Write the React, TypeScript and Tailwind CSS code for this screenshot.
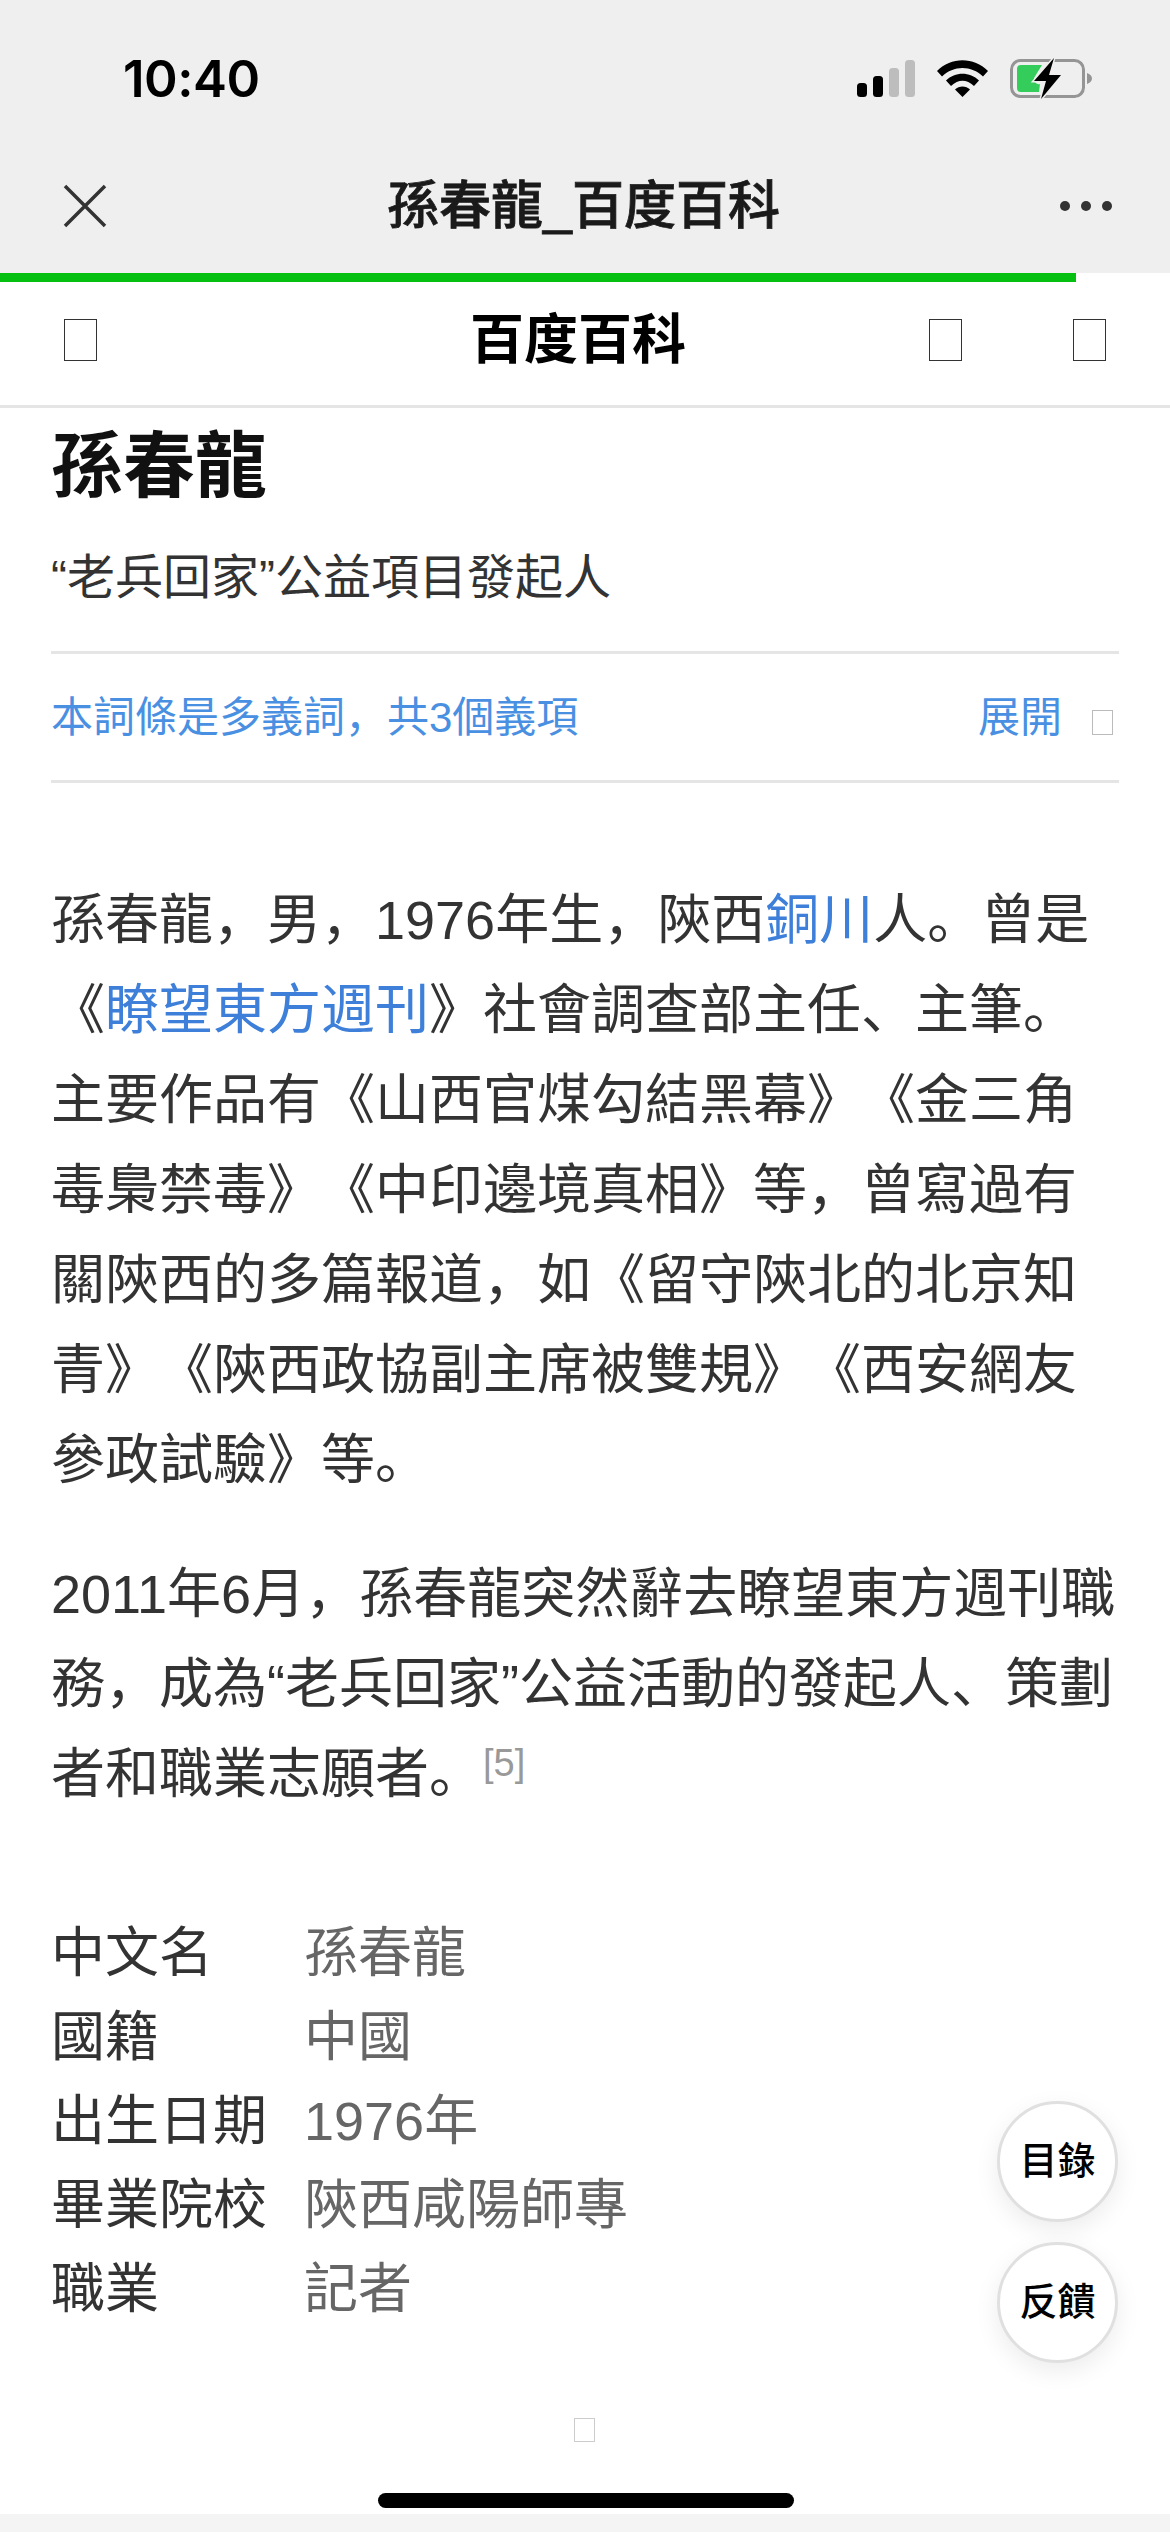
import React from "react";

const CJK = "font-['Liberation_Sans','Noto_Sans_CJK_SC','Noto_Sans_CJK_TC',sans-serif] [text-spacing-trim:space-all]";

function Box({ className }: { className: string }) {
  return <div className={"border border-solid " + className} />;
}

function Link({ children }: { children: React.ReactNode }) {
  return <span className="text-[#3d7fd9]">{children}</span>;
}

function Row({ k, v }: { k: string; v: string }) {
  return (
    <div className="flex h-[84px] items-center text-[54px]">
      <div className="w-[253px] text-[#333333]">{k}</div>
      <div className="text-[#666666]">{v}</div>
    </div>
  );
}

function Round({ t }: { t: string }) {
  return (
    <div className="flex h-[121px] w-[121px] items-center justify-center rounded-full border-[3px] border-solid border-[#e0e0e0] bg-white text-[38px] font-medium text-black shadow-[0_8px_24px_rgba(0,0,0,0.08)]">
      {t}
    </div>
  );
}

export default function App() {
  return (
    <div className={"relative flex h-[2532px] w-[1170px] flex-col overflow-hidden bg-white " + CJK}>
      <div className="h-[273px] shrink-0 bg-[#efefef]">
        <div className="flex h-[155px] items-center justify-between pl-[123px] pr-[78px] pt-[1px]">
          <div className="font-['Inter',sans-serif] text-[51px] font-semibold leading-none tracking-[-0.5px] text-black">10:40</div>
          <div className="flex items-center">
            <svg width="58" height="37" viewBox="0 0 58 37" className="mr-[22px]">
              <rect x="0" y="23" width="10" height="14" rx="3.5" fill="#000" />
              <rect x="16" y="16" width="10" height="21" rx="3.5" fill="#000" />
              <rect x="32" y="8" width="10" height="29" rx="3.5" fill="#bdbdbd" />
              <rect x="48" y="0" width="10" height="37" rx="3.5" fill="#bdbdbd" />
            </svg>
            <svg width="51" height="37" viewBox="0 0 51 37" className="mr-[22px]">
              <path d="M0 11 C14 -3.5 37 -3.5 51 11 L46 16.5 C34.500 5 16.500 5 5 16.500 Z" fill="#000" />
              <path d="M9 20.500 C18 11.500 33 11.500 42 20.500 L37 26 C29.500 19 21.500 19 14 26 Z" fill="#000" />
              <path d="M18 29.500 C22 25.500 29 25.500 33 29.500 L25.500 37 Z" fill="#000" />
            </svg>
            <svg width="82" height="41" viewBox="0 0 82 41">
              <rect x="1.500" y="2.500" width="72" height="36" rx="9" fill="none" stroke="#959595" strokeWidth="3" />
              <path d="M77 15 C80 16 82 18 82 20.500 C82 23 80 25 77 26 Z" fill="#959595" />
              <path d="M12 7 H32 L24 20 C24 24 27 27 30 26 L29 34 H12 C8 34 7 33 7 29 V12 C7 8 8 7 12 7 Z" fill="#34cd5c" />
              <path d="M44 0 L24 23 H36 L31 41 L51 17 H39 Z" fill="#000" stroke="#efefef" strokeWidth="3" paintOrder="stroke" />
            </svg>
          </div>
        </div>
        <div className="flex h-[118px] items-center justify-between pb-[16px] pl-[63px] pr-[58px]">
          <svg width="44" height="44" viewBox="0 0 44 44">
            <path d="M2 2 L42 42 M42 2 L2 42" stroke="#333" strokeWidth="3.500" fill="none" />
          </svg>
          <div className="text-[52px] font-medium leading-none text-[#1a1a1a] [-webkit-text-stroke:0.8px_#1a1a1a]">孫春龍_百度百科</div>
          <svg width="52" height="10" viewBox="0 0 52 10">
            <circle cx="5" cy="5" r="5" fill="#333" />
            <circle cx="26" cy="5" r="5" fill="#333" />
            <circle cx="47" cy="5" r="5" fill="#333" />
          </svg>
        </div>
      </div>

      <div className="h-[9px] w-[1076px] shrink-0 bg-[#05c010]" />

      <div className="flex h-[126px] shrink-0 items-center justify-between border-b-[3px] border-solid border-[#e5e5e5] pb-[8px] pl-[64px] pr-[64px]">
        <Box className="h-[42px] w-[33px] border-[#333333]" />
        <div className="ml-[130px] text-[54px] font-bold leading-none text-black">百度百科</div>
        <div className="flex gap-[111px]">
          <Box className="h-[42px] w-[33px] border-[#333333]" />
          <Box className="h-[42px] w-[33px] border-[#333333]" />
        </div>
      </div>

      <div className="flex flex-col px-[51px]">
        <h1 className="mt-[16px] text-[72px] font-bold leading-[84px] text-[#111111]">孫春龍</h1>
        <p className="mt-[40px] text-[48px] leading-[60px] text-[#333333]">“老兵回家”公益項目發起人</p>
        <div className="mt-[43px] flex h-[132px] items-center justify-between border-y-[3px] border-solid border-[#e5e5e5] text-[42px] text-[#4a90e2]">
          <span>本詞條是多義詞，共3個義項</span>
          <div className="flex items-center">
            <span>展開</span>
            <Box className="ml-[30px] mr-[6px] mt-[10px] h-[25px] w-[21px] border-[#bbbbbb]" />
          </div>
        </div>
        <div className="mt-[92px] text-[54px] leading-[90px] text-[#333333]">
          <p>孫春龍，男，1976年生，陝西<Link>銅川</Link>人。曾是《<Link>瞭望東方週刊</Link>》社會調查部主任、主筆。主要作品有《山西官煤勾結黑幕》《金三角毒梟禁毒》《中印邊境真相》等，曾寫過有關陝西的多篇報道，如《留守陝北的北京知青》《陝西政協副主席被雙規》《西安網友參政試驗》等。</p>
          <p className="mt-[44px]">
            2011年6月，孫春龍突然辭去瞭望東方週刊職務，成為“老兵回家”公益活動的發起人、策劃者和職業志願者。
            <sup className="align-[-2px] text-[38px] leading-none text-[#999999]">[5]</sup>
          </p>
        </div>
        <div className="mt-[92px] flex flex-col">
          <Row k="中文名" v="孫春龍" />
          <Row k="國籍" v="中國" />
          <Row k="出生日期" v="1976年" />
          <Row k="畢業院校" v="陝西咸陽師專" />
          <Row k="職業" v="記者" />
        </div>
        <div className="mt-[87px] flex justify-center">
          <Box className="ml-[-2px] h-[24px] w-[21px] border-[#cccccc]" />
        </div>
      </div>

      <div className="absolute right-[52px] top-[2101px] flex flex-col gap-[20px]">
        <Round t="目錄" />
        <Round t="反饋" />
      </div>

      <div className="absolute left-[378px] top-[2493px] h-[15px] w-[416px] rounded-full bg-black" />
      <div className="absolute bottom-0 left-0 h-[18px] w-full bg-[#f4f4f4]" />
    </div>
  );
}
